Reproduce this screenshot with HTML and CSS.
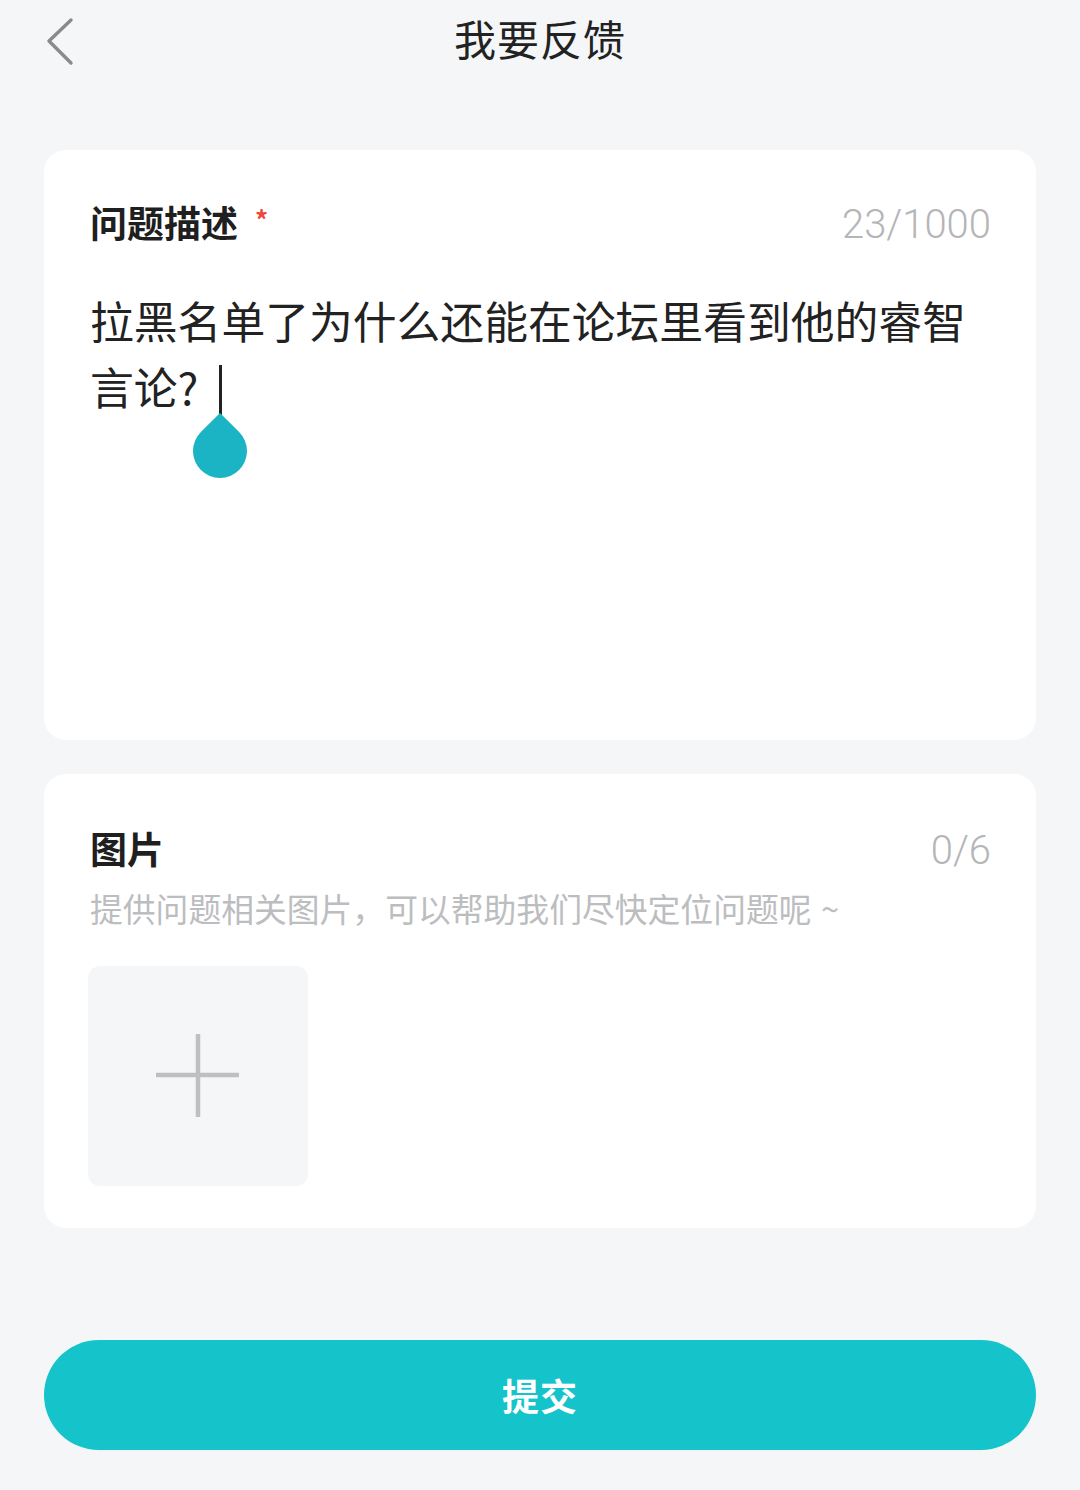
FILE: index.html
```html
<!DOCTYPE html>
<html lang="zh-CN">
<head>
<meta charset="utf-8">
<title>我要反馈</title>
<link rel="stylesheet" href="styles.css">
</head>
<body>
<div class="page">
  <header class="topbar">
    <div class="back">
      <svg width="32" height="50" viewBox="0 0 32 50"><path d="M27 3 L5 24 L27 46" fill="none" stroke="#8a8a8a" stroke-width="3.4" stroke-linecap="round" stroke-linejoin="round"/></svg>
    </div>
    <h1 class="title">我要反馈</h1>
    <div></div>
  </header>

  <section class="card card-desc">
    <div class="row">
      <div class="label">问题描述<span class="req">*</span></div>
      <div class="count">23/1000</div>
    </div>
    <div class="content">拉黑名单了为什么还能在论坛里看到他的睿智言论?<span class="caret"><svg class="drop" width="56" height="66" viewBox="0 0 56 66"><path d="M28 0 L47.1 18.9 A27 27 0 1 1 8.9 18.9 Z" fill="#1ab4c4"/></svg></span></div>
  </section>

  <section class="card card-pic">
    <div class="row">
      <div class="label">图片</div>
      <div class="count">0/6</div>
    </div>
    <div class="hint">提供问题相关图片，可以帮助我们尽快定位问题呢 ~</div>
    <div class="add">
      <svg width="86" height="86" viewBox="0 0 86 86"><path d="M43 1 V84 M1 42 H84" stroke="#bdbfc1" stroke-width="4.5" fill="none"/></svg>
    </div>
  </section>

  <button class="submit">提交</button>
</div>
</body>
</html>
```

FILE: styles.css
```css
* { box-sizing: border-box; }
html, body {
  margin: 0;
  padding: 0;
  background: #f5f6f8;
}
body {
  font-family: "Noto Sans CJK SC", "Noto Sans", sans-serif;
  color: #222;
}
.page {
  width: 1080px;
  height: 1490px;
  display: flex;
  flex-direction: column;
}
.topbar {
  height: 82px;
  display: grid;
  grid-template-columns: 1fr auto 1fr;
  align-items: center;
}
.back {
  padding-left: 44px;
  padding-top: 2px;
  display: flex;
  align-items: center;
}
.title {
  margin: 0 0 6px;
  font-size: 42px;
  font-weight: 400;
  line-height: 76px;
  color: #222;
  letter-spacing: 1px;
}
.card {
  background: #fff;
  border-radius: 22px;
  margin: 0 44px;
  padding: 0 45px 0 46px;
}
.card-desc {
  margin-top: 68px;
  height: 590px;
  padding-top: 47px;
}
.row {
  display: flex;
  justify-content: space-between;
  align-items: center;
  height: 50px;
}
.label {
  font-size: 37px;
  font-weight: 700;
  color: #1f1f1f;
  line-height: 50px;
  display: flex;
  align-items: flex-start;
}
.req {
  color: #f0443c;
  font-size: 26px;
  line-height: 26px;
  margin-left: 17px;
  margin-top: 9px;
  font-weight: 700;
}
.count {
  font-family: "Roboto", "Noto Sans", sans-serif;
  font-weight: 300;
  font-size: 40px;
  color: #b4b5b7;
  line-height: 50px;
  padding-top: 6px;
}
.content {
  margin-top: 40px;
  font-size: 43.8px;
  line-height: 66px;
  color: #222;
  font-weight: 400;
}
.caret {
  position: relative;
  display: inline-block;
  width: 3px;
  height: 52px;
  background: #222;
  margin-left: 21px;
  vertical-align: -12px;
}
.drop {
  position: absolute;
  top: 48px;
  left: 50%;
  transform: translateX(-29px);
  display: block;
}
.card-pic {
  margin-top: 34px;
  height: 454px;
  padding-top: 49px;
}
.hint {
  margin-top: 13px;
  font-size: 32.8px;
  line-height: 44px;
  color: #bcbdbf;
  word-spacing: 2px;
}
.add {
  margin-top: 36px;
  margin-left: -2px;
  width: 220px;
  height: 220px;
  border-radius: 12px;
  background: #f5f6f8;
  display: flex;
  align-items: center;
  justify-content: center;
}
.submit {
  margin: 112px 44px 0;
  height: 110px;
  border: none;
  border-radius: 55px;
  background: #15c3cb;
  color: #fff;
  font-family: "Noto Sans CJK SC", "Noto Sans", sans-serif;
  font-size: 37px;
  font-weight: 700;
  letter-spacing: 1px;
}
```
